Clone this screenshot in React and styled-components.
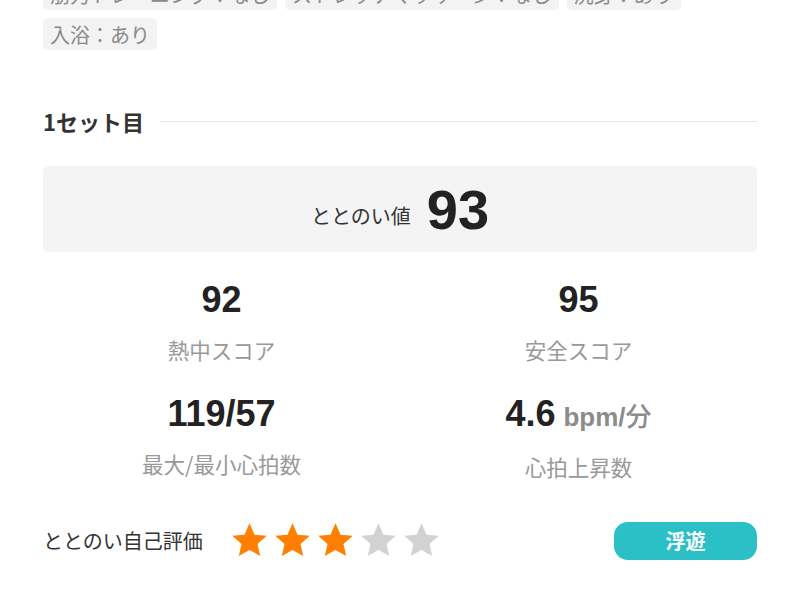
import styled, { createGlobalStyle } from 'styled-components';

const GlobalStyle = createGlobalStyle`
  body {
    margin: 0;
    background: #fff;
    font-family: "Noto Sans CJK JP", "Noto Sans", sans-serif;
    color: #222;
  }
`;

const Page = styled.div`
  width: 800px;
  height: 600px;
  overflow: hidden;
  padding: 0 43px;
  box-sizing: border-box;
`;

const TagList = styled.div`
  display: flex;
  flex-wrap: wrap;
  gap: 8px;
  margin-top: -22px;
`;

const Tag = styled.span`
  display: inline-flex;
  align-items: center;
  height: 32px;
  padding: 0 7px;
  border-radius: 5px;
  background: #f3f3f3;
  color: #8a8a8a;
  font-size: 20px;
`;

const SetHeader = styled.div`
  display: flex;
  align-items: center;
  gap: 16px;
  margin-top: 56px;
  height: 30px;
`;

const SetTitle = styled.h2`
  margin: 0;
  font-size: 22px;
  font-weight: 700;
  color: #333;
`;

const Rule = styled.div`
  flex: 1;
  height: 1px;
  background: #e6e6e6;
`;

const ScoreBox = styled.div`
  margin-top: 30px;
  height: 86px;
  background: #f4f4f4;
  border-radius: 6px;
  display: flex;
  align-items: center;
  justify-content: center;
  gap: 16px;
`;

const ScoreLabel = styled.span`
  font-size: 20px;
  color: #333;
  margin-top: 12px;
`;

const ScoreValue = styled.span`
  font-family: "Liberation Sans", Arial, sans-serif;
  font-weight: 700;
  font-size: 56px;
  color: #222;
`;

const StatGrid = styled.div`
  display: grid;
  grid-template-columns: 1fr 1fr;
  row-gap: 29px;
  margin-top: 28px;
`;

const Stat = styled.div`
  display: flex;
  flex-direction: column;
  align-items: center;
`;

const StatValue = styled.div`
  font-family: "Liberation Sans", Arial, "Noto Sans CJK JP", sans-serif;
  font-weight: 700;
  font-size: 36px;
  line-height: 40px;
  color: #222;
`;

const Unit = styled.span`
  font-size: 26px;
  color: #8c8c8c;
  margin-left: 8px;
`;

const UnitKanji = styled.span`
  font-family: "Noto Sans CJK JP", sans-serif;
  font-weight: 500;
`;

const StatLabel = styled.div`
  margin-top: 15px;
  font-size: 21.5px;
  line-height: 30px;
  color: #999;
`;

const RatingRow = styled.div`
  display: flex;
  align-items: center;
  margin-top: 39px;
`;

const RatingLabel = styled.span`
  font-size: 20px;
  color: #333;
  width: 187px;
`;

const Stars = styled.div`
  display: flex;
  gap: 4px;
  flex: 1;
`;

const Mood = styled.div`
  width: 143px;
  height: 38px;
  border-radius: 14px;
  background: #2bc0c6;
  color: #fff;
  font-weight: 700;
  font-size: 20px;
  display: flex;
  align-items: center;
  justify-content: center;
`;

const Star = ({ on }) => (
  <svg width="39" height="39" viewBox="0 0 24 24">
    <path
      d="M12 1.4l3.1 7 7.5.7-5.7 5 1.7 7.4L12 17.8l-6.6 3.7 1.7-7.4-5.7-5 7.5-.7z"
      fill={on ? '#ff7f00' : '#d2d2d2'}
    />
  </svg>
);

const stats = [
  { value: '92', label: '熱中スコア' },
  { value: '95', label: '安全スコア' },
  { value: '119/57', label: '最大/最小心拍数' },
  { value: '4.6', unit: true, label: '心拍上昇数' },
];

export default function App() {
  return (
    <Page>
      <GlobalStyle />
      <TagList>
        <Tag>筋力トレーニング：なし</Tag>
        <Tag>ストレッチマッサージ：なし</Tag>
        <Tag>洗身：あり</Tag>
        <Tag>入浴：あり</Tag>
      </TagList>

      <SetHeader>
        <SetTitle>1セット目</SetTitle>
        <Rule />
      </SetHeader>

      <ScoreBox>
        <ScoreLabel>ととのい値</ScoreLabel>
        <ScoreValue>93</ScoreValue>
      </ScoreBox>

      <StatGrid>
        {stats.map((s) => (
          <Stat key={s.label}>
            <StatValue>
              {s.value}
              {s.unit && (
                <Unit>
                  bpm/<UnitKanji>分</UnitKanji>
                </Unit>
              )}
            </StatValue>
            <StatLabel>{s.label}</StatLabel>
          </Stat>
        ))}
      </StatGrid>

      <RatingRow>
        <RatingLabel>ととのい自己評価</RatingLabel>
        <Stars>
          {[1, 2, 3, 4, 5].map((n) => (
            <Star key={n} on={n <= 3} />
          ))}
        </Stars>
        <Mood>浮遊</Mood>
      </RatingRow>
    </Page>
  );
}
